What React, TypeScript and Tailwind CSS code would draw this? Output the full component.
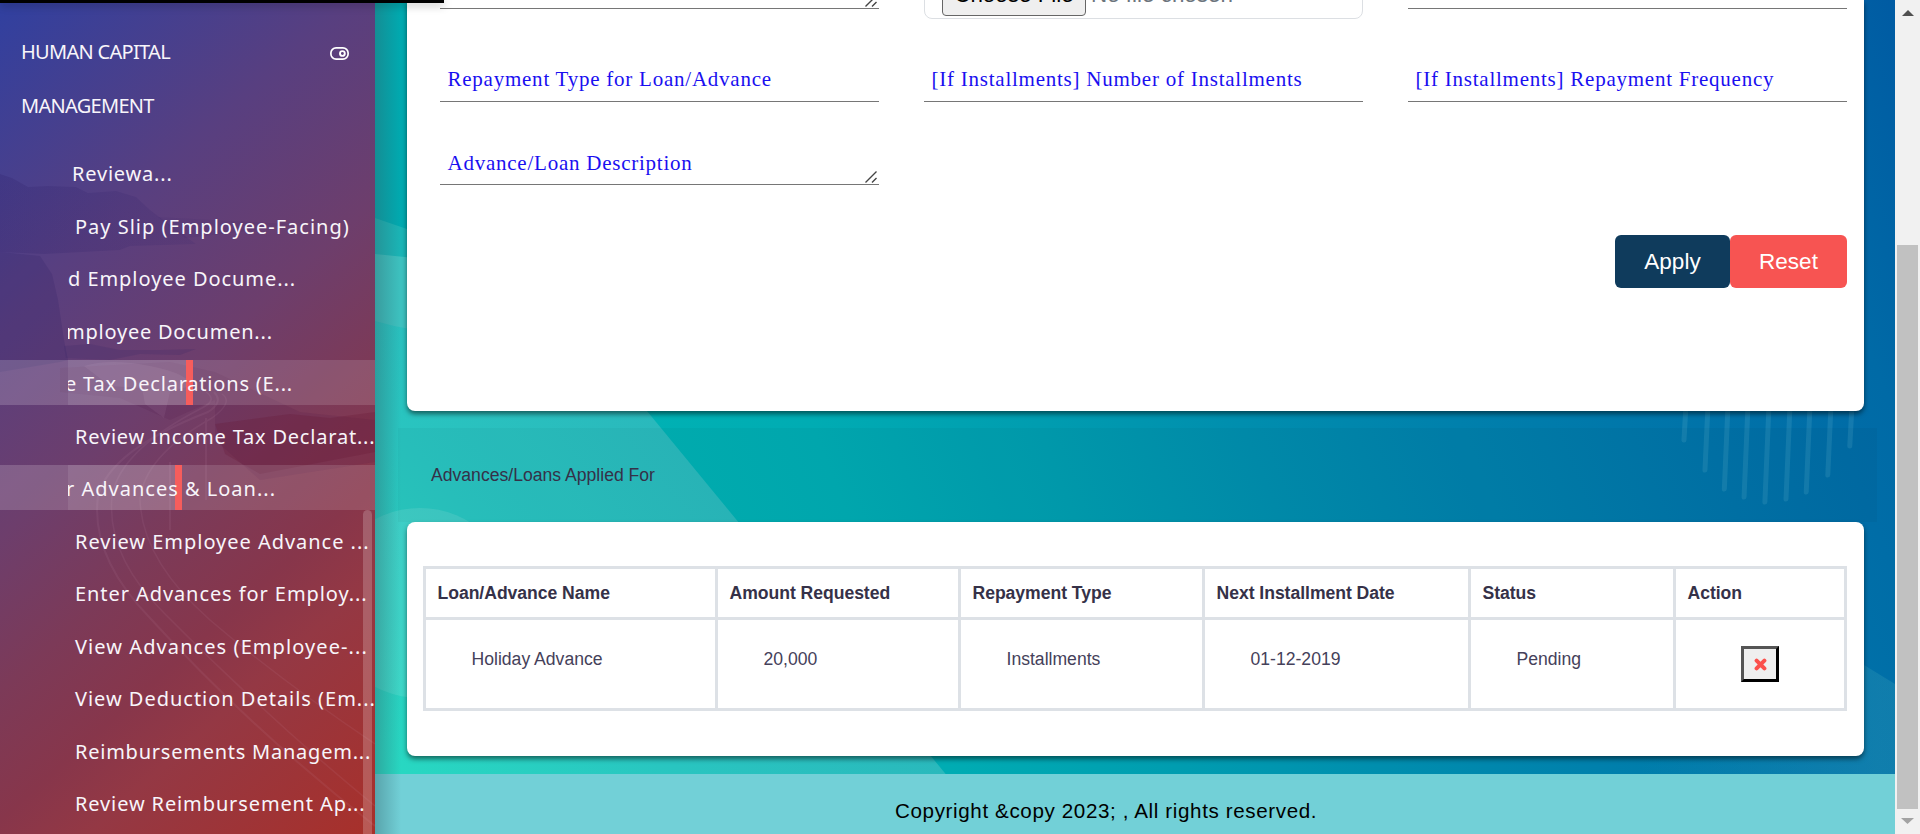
import type { ReactNode } from "react";

const sans = "font-['Liberation_Sans',Arial,sans-serif]";

type Item = {
  label: string;
  cut?: boolean;
  pad: string;
  tracking: string;
  bar?: string;
};

const items: Item[] = [
  { label: "Reviewa...", pad: "pl-[72px]", tracking: "tracking-[0.8px]" },
  { label: "Pay Slip (Employee-Facing)", pad: "pl-[75px]", tracking: "tracking-[1px]" },
  { label: "d Employee Docume...", pad: "pl-[68px]", tracking: "tracking-[0.95px]" },
  { label: "mployee Documen...", cut: true, pad: "-ml-[2px]", tracking: "tracking-[0.77px]" },
  { label: "e Tax Declarations (E...", cut: true, pad: "-ml-[3px]", tracking: "tracking-[0.8px]", bar: "w-[118px]" },
  { label: "Review Income Tax Declarat...", pad: "pl-[75px]", tracking: "tracking-[0.8px]" },
  { label: "r Advances & Loan...", cut: true, pad: "-ml-[2px]", tracking: "tracking-[1px]", bar: "w-[107px]" },
  { label: "Review Employee Advance ...", pad: "pl-[75px]", tracking: "tracking-[0.97px]" },
  { label: "Enter Advances for Employ...", pad: "pl-[75px]", tracking: "tracking-[0.92px]" },
  { label: "View Advances (Employee-...", pad: "pl-[75px]", tracking: "tracking-[1.08px]" },
  { label: "View Deduction Details (Em...", pad: "pl-[75px]", tracking: "tracking-[0.98px]" },
  { label: "Reimbursements Managem...", pad: "pl-[75px]", tracking: "tracking-[0.76px]" },
  { label: "Review Reimbursement Ap...", pad: "pl-[75px]", tracking: "tracking-[0.88px]" },
];

function SidebarArt() {
  return (
    <svg className="absolute inset-0" width="375" height="834" viewBox="0 0 375 834" fill="none">
      <defs>
        <linearGradient id="ridge" x1="0" y1="0" x2="1" y2="0">
          <stop offset="0" stopColor="#2b1c66" stopOpacity=".22" />
          <stop offset="1" stopColor="#2b1c66" stopOpacity=".12" />
        </linearGradient>
      </defs>
      <path d="M0 174L12 178L28 187L48 186L76 187L88 193L116 191L136 197L150 210L166 222L196 244L130 246L120 250L44 254L0 252Z" fill="url(#ridge)" />
      <path d="M158 217L230 221L290 224L240 232L185 238Z" fill="#2b1c66" opacity=".07" />
      <path d="M0 252L40 256L52 274L58 300L64 340L68 360L60 362L0 372Z" fill="#2b1c66" opacity=".2" />
      <path d="M64 346L90 344L120 350L160 350L196 349L180 355L140 354L110 360L66 358Z" fill="#2b1c66" opacity=".16" />
      <path d="M60 368L170 362L215 372L300 412L375 420V462L260 480L215 440L215 400L170 420L120 398L60 392Z" fill="#4a0f45" opacity=".12" />
      <path d="M215 424L290 414L330 418L375 412V452L260 474L225 454Z" fill="#651634" opacity=".24" />
      <path d="M84 366Q110 358 150 366T190 386L170 392L164 418L145 404L142 388L110 386Z" fill="#c9a0c8" opacity=".1" />
      <g stroke="#d9a6c4" opacity=".08">
        <path strokeWidth="2" d="M214 392Q224 402 208 412Q110 450 98 496Q90 556 150 618Q250 728 375 826" />
        <path strokeWidth="1.5" d="M206 392Q218 400 202 408Q120 450 112 496Q106 556 165 614Q270 720 375 806" />
        <path strokeWidth="1.5" d="M222 394Q234 402 212 418Q144 456 140 500Q142 560 210 620Q280 680 375 744" />
        <path strokeWidth="2" d="M206 418V500M170 462V530" />
      </g>
    </svg>
  );
}

function PageArt() {
  const bars = [
    [1685, 442], [1707, 472], [1727, 491], [1747, 499], [1768, 504],
    [1789, 501], [1809, 494], [1830, 477], [1851, 448],
  ];
  return (
    <svg className="absolute inset-0" width="1520" height="834" viewBox="375 0 1520 834">
      <defs>
        <linearGradient id="sea" gradientUnits="userSpaceOnUse" x1="640" y1="640" x2="1943" y2="119">
          <stop offset="0" stopColor="#00b4b4" />
          <stop offset=".17" stopColor="#00acb3" />
          <stop offset=".32" stopColor="#009db0" />
          <stop offset=".455" stopColor="#008eae" />
          <stop offset=".6" stopColor="#0080ac" />
          <stop offset=".76" stopColor="#0073a9" />
          <stop offset=".89" stopColor="#006aa6" />
          <stop offset="1" stopColor="#005ba3" />
        </linearGradient>
        <linearGradient id="mint" gradientUnits="userSpaceOnUse" x1="400" y1="780" x2="740" y2="500">
          <stop offset="0" stopColor="#28d8c2" />
          <stop offset=".5" stopColor="#29c5c0" />
          <stop offset="1" stopColor="#2ab8bc" />
        </linearGradient>
        <linearGradient id="glow" gradientUnits="userSpaceOnUse" x1="1640" y1="0" x2="1880" y2="0">
          <stop offset="0" stopColor="#3aa0b8" stopOpacity="0" />
          <stop offset="1" stopColor="#3aa0b8" stopOpacity=".28" />
        </linearGradient>
      </defs>
      <rect x="375" width="1520" height="834" fill="url(#sea)" />
      <rect x="375" width="40" height="330" fill="#00aab0" />
      <path d="M375 218L407 229V260H375Z" fill="#1ab5b6" />
      <path d="M375 315H568L995 834H375Z" fill="url(#mint)" />
      <path d="M375 254L415 258V330Q395 327 375 321Z" fill="#3dc2c0" />
      <circle cx="420" cy="603" r="95" fill="#fff" opacity=".1" />
      <path d="M1640 780V650H1840L1864 665L1895 684V780Z" fill="url(#glow)" />
      <g stroke="#7fc4dc" strokeOpacity=".16" strokeWidth="5" strokeLinecap="round">
        {bars.map(([x, y]) => (
          <path key={x} d={`M${x + 1} 405L${x - (y - 411) / 30} ${y - 2}`} />
        ))}
      </g>
    </svg>
  );
}

function Grip() {
  return (
    <svg className="absolute right-[2px] bottom-[1px]" width="12" height="12" viewBox="0 0 12 12" stroke="#444" strokeWidth="1.4">
      <path d="M.5 11.5L11.5 .5M7 11.5L11.5 7" />
    </svg>
  );
}

function Field({ children, grip, line = "leading-[42px]" }: { children?: ReactNode; grip?: boolean; line?: string }) {
  return (
    <div className={`relative h-[44px] border-b border-[#767676] pl-[7.5px] font-['Liberation_Serif','Times_New_Roman',serif] text-[21px] tracking-[0.76px] whitespace-nowrap text-[#1a0ff0] ${line}`}>
      {children}
      {grip && <Grip />}
    </div>
  );
}

function Sidebar() {
  return (
    <aside className="relative z-10 h-[834px] w-[375px] shrink-0 overflow-hidden bg-[linear-gradient(138deg,#3040a0_0%,#583f80_27%,#6d3e6c_46%,#7c3a58_59%,#87364b_70%,#943844_78%,#a8302a_100%)] font-['Noto_Sans','Open_Sans',sans-serif] text-[#f8f5fa]">
      <SidebarArt />
      <div className="relative flex h-[150px] justify-between pt-[25px] pr-[26px] pl-[21px] text-[20px] leading-[54px]">
        <div className="w-[180px] tracking-[-0.7px]">
          HUMAN CAPITAL
          <br />
          MANAGEMENT
        </div>
        <svg className="mt-[22px]" width="19" height="13" viewBox="0 0 19 13" fill="none" stroke="#fff">
          <rect x=".9" y=".9" width="17.2" height="11.2" rx="5.2" strokeWidth="1.7" />
          <circle cx="12.4" cy="6.5" r="2.4" strokeWidth="1.9" />
        </svg>
      </div>
      <ul className="relative flex flex-col gap-[7.5px]">
        {items.map((it) => (
          <li
            key={it.label}
            className={`relative flex h-[45px] text-[20px] leading-[48px] whitespace-nowrap ${it.bar ? "bg-white/[0.13]" : ""}`}
          >
            {it.bar && (
              <div className="absolute inset-y-0 left-0 flex">
                <div className="w-[68px] bg-white/[0.05]" />
                <div className={`bg-white/[0.13] ${it.bar}`} />
                <div className="w-[7px] bg-[#f65d5c]" />
              </div>
            )}
            {it.cut ? (
              <div className="relative ml-[68px] overflow-hidden">
                <div className={`${it.pad} ${it.tracking}`}>{it.label}</div>
              </div>
            ) : (
              <div className={`relative ${it.pad} ${it.tracking}`}>{it.label}</div>
            )}
          </li>
        ))}
      </ul>
      <div className="absolute top-[510px] right-[3px] h-[340px] w-[9px] rounded-full bg-white/20" />
    </aside>
  );
}

const columns = [
  { head: "Loan/Advance Name", cell: "Holiday Advance", w: "w-[292px]" },
  { head: "Amount Requested", cell: "20,000", w: "w-[243px]" },
  { head: "Repayment Type", cell: "Installments", w: "w-[244px]" },
  { head: "Next Installment Date", cell: "01-12-2019", w: "w-[266px]" },
  { head: "Status", cell: "Pending", w: "w-[205px]" },
  { head: "Action", cell: null, w: "w-[171px]" },
];

export default function App() {
  return (
    <div className={`relative flex h-[834px] w-[1920px] overflow-hidden bg-white ${sans}`}>
      <Sidebar />
      <main className="relative flex w-[1520px] flex-col">
        <PageArt />
        <section className="relative mx-8 h-[411px] w-[1457px] rounded-b-lg bg-white pr-[17px] pl-[33px] shadow-[0_3px_5px_rgba(0,0,0,0.5)]">
          <div className="grid h-[19px] grid-cols-3 grid-rows-[19px] items-end gap-x-[45px] overflow-hidden">
            <div className="mb-[10px]"><Field grip /></div>
            <div className="flex h-[52px] rounded-lg border border-[#dcdfe3] pt-[6px] pl-[17px] leading-[26px] text-[#6c757d]">
              <div className="h-[42px] w-[144px] rounded-[4px] border border-[#666] bg-[#efefef] pt-[7px] text-center text-[22.4px] text-black">Choose File</div>
              <div className="pt-[8px] pl-[5px] text-[22.4px]">No file chosen</div>
            </div>
            <div className="mb-[10px]"><Field /></div>
          </div>
          <div className="mt-[39px] grid grid-cols-3 gap-x-[45px] gap-y-[39px]">
            <Field>Repayment Type for Loan/Advance</Field>
            <Field>[If Installments] Number of Installments</Field>
            <Field>[If Installments] Repayment Frequency</Field>
            <Field grip line="leading-[44px]">Advance/Loan Description</Field>
          </div>
          <div className="mt-[50px] flex justify-end text-[22.5px] leading-[52px] text-white">
            <button className="h-[53px] w-[115px] rounded-[6px] bg-[#0f3b5c]">Apply</button>
            <button className="h-[53px] w-[117px] rounded-[6px] bg-[#f75452]">Reset</button>
          </div>
        </section>
        <h2 className="relative mt-[17px] ml-[23px] h-[94px] w-[1479px] bg-black/[0.03] pl-[33px] text-[17.6px] leading-[94px] text-[#353148]">
          Advances/Loans Applied For
        </h2>
        <section className="relative ml-8 h-[234px] w-[1457px] rounded-lg bg-white pt-[44px] pl-[16px] shadow-[0_3px_5px_rgba(0,0,0,0.5)]">
          <div className="flex w-[1424px] border-[3px] border-r-0 border-[#dde1e6] text-[17.6px] text-[#353148]">
            {columns.map((c) => (
              <div key={c.head} className={`border-r-[3px] border-[#dde1e6] ${c.w}`}>
                <div className="h-[51px] border-b-[3px] border-[#dde1e6] pl-[11.5px] leading-[49px] font-bold tracking-[-0.04px] whitespace-nowrap">{c.head}</div>
                {c.cell ? (
                  <div className="h-[88px] pl-[45.5px] leading-[79px] text-[#45415a]">{c.cell}</div>
                ) : (
                  <div className="flex h-[88px] pt-[26px] pl-[65px]">
                    <button className="flex h-[36px] w-[38px] items-center justify-center border-[3px] border-t-[#555] border-r-black border-b-black border-l-[#555] bg-[#efefef]">
                      <svg width="13" height="13" viewBox="0 0 13 13" stroke="#fb504c" strokeWidth="4" strokeLinecap="round">
                        <path d="M2.6 2.6L10.4 10.4M10.4 2.6L2.6 10.4" />
                      </svg>
                    </button>
                  </div>
                )}
              </div>
            ))}
          </div>
        </section>
        <footer className="relative mt-[18px] h-[60px] bg-[#72d0d7] pl-[520px] text-[20.6px] leading-[74px] tracking-[0.62px] text-black">
          Copyright &amp;copy 2023; , All rights reserved.
        </footer>
        <div className="absolute inset-y-0 left-0 w-[26px] bg-gradient-to-r from-[#33636b]/40 to-transparent" />
      </main>
      <div className="flex w-[25px] shrink-0 flex-col items-center justify-between bg-[#f1f1f1] pt-[10px] pb-[10px]">
        <svg width="12" height="6" viewBox="0 0 12 6"><path d="M6 0L12 6H0Z" fill="#505050" /></svg>
        <div className="mt-[220px] h-[564px] w-[21px] shrink-0 bg-[#c1c1c1]" />
        <svg width="13" height="6" viewBox="0 0 13 6"><path d="M6.5 6L13 0H0Z" fill="#a3a3a3" /></svg>
      </div>
      <div className="absolute top-0 left-0 z-20 h-[3px] w-[444px] bg-black shadow-[0_2px_8px_rgba(0,0,0,0.4)]" />
    </div>
  );
}
